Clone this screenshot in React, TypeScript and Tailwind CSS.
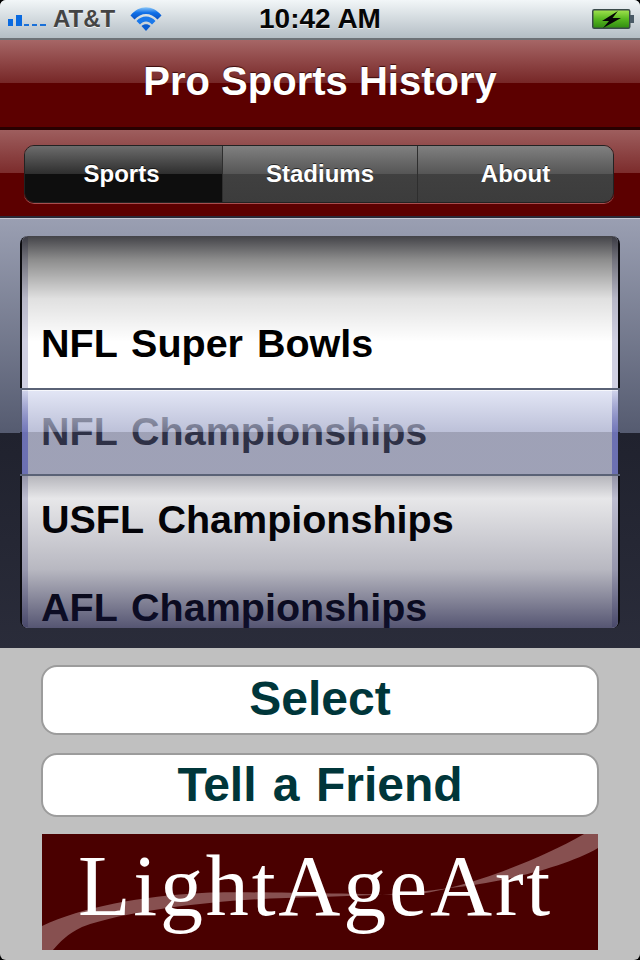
const sans = "font-['Liberation_Sans',Arial,sans-serif]";

function SignalIcon() {
  return (
    <svg width="40" height="14" viewBox="0 0 40 14" className="shrink-0">
      <rect x="0" y="7" width="5" height="7" fill="#0a6ae0" />
      <rect x="8" y="3" width="6" height="11" fill="#0a6ae0" />
      <rect x="16" y="12" width="5" height="2" fill="#1a70d8" />
      <rect x="24" y="12" width="5" height="2" fill="#1a70d8" />
      <rect x="32" y="12" width="6" height="2" fill="#1a70d8" />
    </svg>
  );
}

function WifiIcon() {
  return (
    <svg width="32" height="26" viewBox="0 0 32 26" className="shrink-0">
      <defs>
        <linearGradient id="wifi" x1="0" y1="0" x2="0" y2="1">
          <stop offset="0" stopColor="#8cc8f8" />
          <stop offset="0.45" stopColor="#1070e8" />
          <stop offset="1" stopColor="#0a50c0" />
        </linearGradient>
      </defs>
      <path d="M0.5 9.5C9 -1.5 23 -1.5 31.5 9.5L27.5 13.5C21 6 11 6 4.5 13.5Z" fill="url(#wifi)" />
      <path d="M6.5 15C11.5 9 20.5 9 25.5 15L22 18.5C18.5 14.5 13.5 14.5 10 18.5Z" fill="#1a78ea" />
      <path d="M11.5 20C14 17.5 18 17.5 20.5 20L16 25Z" fill="#0a5cd0" />
    </svg>
  );
}

function BatteryIcon() {
  return (
    <svg width="42" height="21" viewBox="0 0 42 21" className="shrink-0">
      <defs>
        <linearGradient id="charge" x1="0" y1="0" x2="0" y2="1">
          <stop offset="0" stopColor="#a4e450" />
          <stop offset="0.5" stopColor="#58b820" />
          <stop offset="1" stopColor="#2f8a10" />
        </linearGradient>
      </defs>
      <rect x="0.75" y="0.75" width="37" height="18.5" rx="1.5" fill="url(#charge)" stroke="#3a4a4a" strokeWidth="1.5" />
      <rect x="38" y="6" width="4" height="8" fill="#4a5a66" />
      <path d="M26 2L10 12H17L11 19L29 9H20.5Z" fill="#060606" />
    </svg>
  );
}

function StatusBar() {
  return (
    <div className="flex h-10 shrink-0 items-center justify-between border-b-2 border-[#6d7277] bg-gradient-to-b from-[#f2f6f8] to-[#b4bec5] pl-2 pr-1.5">
      <div className="flex w-[200px] items-center">
        <SignalIcon />
        <span className="ml-[5px] text-[24px] font-bold leading-none text-[#444] [text-shadow:0_1px_0_rgba(255,255,255,.7)]">
          AT&amp;T
        </span>
        <span className="ml-[15px]">
          <WifiIcon />
        </span>
      </div>
      <span className="-ml-[2px] text-[28px] font-bold leading-none text-[#060606] [text-shadow:0_1px_0_rgba(255,255,255,.7)]">
        10:42 AM
      </span>
      <div className="flex w-[200px] justify-end">
        <BatteryIcon />
      </div>
    </div>
  );
}

function NavBar() {
  return (
    <div className="flex h-[90px] shrink-0 items-center justify-center border-b-[3px] border-[#280000] bg-[linear-gradient(#a66666,#762626_50%,#5c0000_50%,#5c0000)] pb-[5px]">
      <h1 className="text-[40px] font-bold leading-none text-white [text-shadow:0_-1px_1px_rgba(40,0,0,.8)]">
        Pro Sports History
      </h1>
    </div>
  );
}

function Tab({ label, active }: { label: string; active?: boolean }) {
  return (
    <div
      className={`flex h-full items-center justify-center pb-px text-[24px] font-bold text-white [text-shadow:0_-1px_0_rgba(0,0,0,.6)] ${
        active
          ? "bg-[linear-gradient(#6c6c6c,#2e2e2e_50%,#0e0e0e_50%,#0e0e0e)] pr-1"
          : "border-l border-[#2e2e2e] bg-[linear-gradient(#808080,#555_50%,#404040_50%,#3c3c3c)]"
      }`}
    >
      {label}
    </div>
  );
}

function Toolbar() {
  return (
    <div className="flex h-[88px] shrink-0 items-start border-b-2 border-[#2a2a38] bg-[linear-gradient(#9e5e5e,#7c2c2c_50%,#5c0000_50%,#5c0000)] px-6 pt-[15px]">
      <div className="grid h-[58px] w-[590px] grid-cols-[197px_195px_196px] overflow-hidden rounded-[10px] border border-[#222] shadow-[0_1px_0_rgba(220,130,130,.6)]">
        <Tab label="Sports" active />
        <Tab label="Stadiums" />
        <Tab label="About" />
      </div>
    </div>
  );
}

function PickerRow({ label }: { label: string }) {
  return (
    <div className="flex h-[88px] shrink-0 items-center pl-[13px] text-[39.5px] font-bold leading-none whitespace-nowrap text-black [word-spacing:3px]">
      {label}
    </div>
  );
}

function Picker() {
  return (
    <div className="h-[430px] shrink-0 border-t border-[#c6c8d2] bg-[linear-gradient(#9a9fb2,#555b70_50%,#20222e_50%,#2a2c3a)] px-5 pt-[17px]">
      <div className="relative h-[392px] rounded-[8px] border-x-2 border-[#0c0c10]">
        <div className="h-full overflow-hidden rounded-[6px] border-x-[6px] border-[#d0d0e2] bg-white">
          <div className="flex h-full flex-col pt-16">
            <PickerRow label="NFL Super Bowls" />
            <PickerRow label="NFL Championships" />
            <PickerRow label="USFL Championships" />
            <PickerRow label="AFL Championships" />
          </div>
        </div>
        {/* wheel shading */}
        <div className="absolute inset-0 rounded-[6px] bg-[linear-gradient(rgba(20,20,26,.8),rgba(0,0,0,.45)_6%,rgba(0,0,0,.12)_16%,rgba(0,0,0,0)_27%,rgba(0,0,0,0)_61%,rgba(20,20,40,.32)_61%,rgba(20,20,40,.1)_67%,rgba(20,20,50,.3)_85%,rgba(20,20,60,.72))]" />
        {/* selection bar */}
        <div className="absolute -inset-x-[2px] top-[152px] h-[88px] border-y-2 border-[#5a6276] bg-[linear-gradient(rgba(222,226,244,.85),rgba(160,166,200,.7)_50%,rgba(83,88,126,.56)_50%,rgba(83,88,126,.56))] shadow-[inset_0_1px_0_rgba(255,255,255,.7)]">
          <div className="absolute inset-y-0 left-0 w-[2px] bg-[linear-gradient(#5a6076,#555b70_50%,#20222e_50%)]" />
          <div className="absolute inset-y-0 right-0 w-[2px] bg-[linear-gradient(#5a6076,#555b70_50%,#20222e_50%)]" />
          <div className="absolute inset-y-0 left-[2px] w-[6px] bg-[linear-gradient(rgba(120,125,190,.1),rgba(100,105,180,.8)_50%)]" />
          <div className="absolute inset-y-0 right-[2px] w-[6px] bg-[linear-gradient(rgba(120,125,190,.1),rgba(100,105,180,.8)_50%)]" />
        </div>
      </div>
    </div>
  );
}

function ActionButton({ label, className }: { label: string; className: string }) {
  return (
    <button
      className={`flex w-full items-center justify-center rounded-[16px] border-2 border-[#9c9c9c] bg-white text-[48px] font-bold leading-none text-[#00363a] [word-spacing:3px] ${className}`}
    >
      {label}
    </button>
  );
}

function LogoBanner() {
  return (
    <div className="relative mx-px h-[116px] overflow-hidden bg-[#4a0000]">
      <svg viewBox="0 0 556 116" className="absolute inset-0 h-full w-full">
        <path
          d="M0 92C40 73 100 62 160 59C200 57 300 60 367 61C410 58 490 30 542 0H556V14C520 35 450 50 408 54C350 62 300 62 244 64C180 66 90 75 40 93C25 100 18 108 11 116H0Z"
          fill="#875050"
        />
      </svg>
      <div className="relative pl-[36px] pt-[2px] font-['Liberation_Serif','Times_New_Roman',serif] text-[86px] leading-[100px] tracking-[2.8px] text-white">
        LightAgeArt
      </div>
    </div>
  );
}

export default function App() {
  return (
    <div className={`h-[960px] w-[640px] bg-black ${sans}`}>
      <div className="flex h-full flex-col overflow-hidden rounded-[6px] bg-[#c0c0c0]">
        <StatusBar />
        <NavBar />
        <Toolbar />
        <Picker />
        <div className="flex flex-col px-[41px] pt-[17px]">
          <ActionButton label="Select" className="h-[70px] pb-[2px]" />
          <ActionButton label="Tell a Friend" className="mt-[18px] h-[64px]" />
          <div className="mt-[17px]">
            <LogoBanner />
          </div>
        </div>
      </div>
    </div>
  );
}
